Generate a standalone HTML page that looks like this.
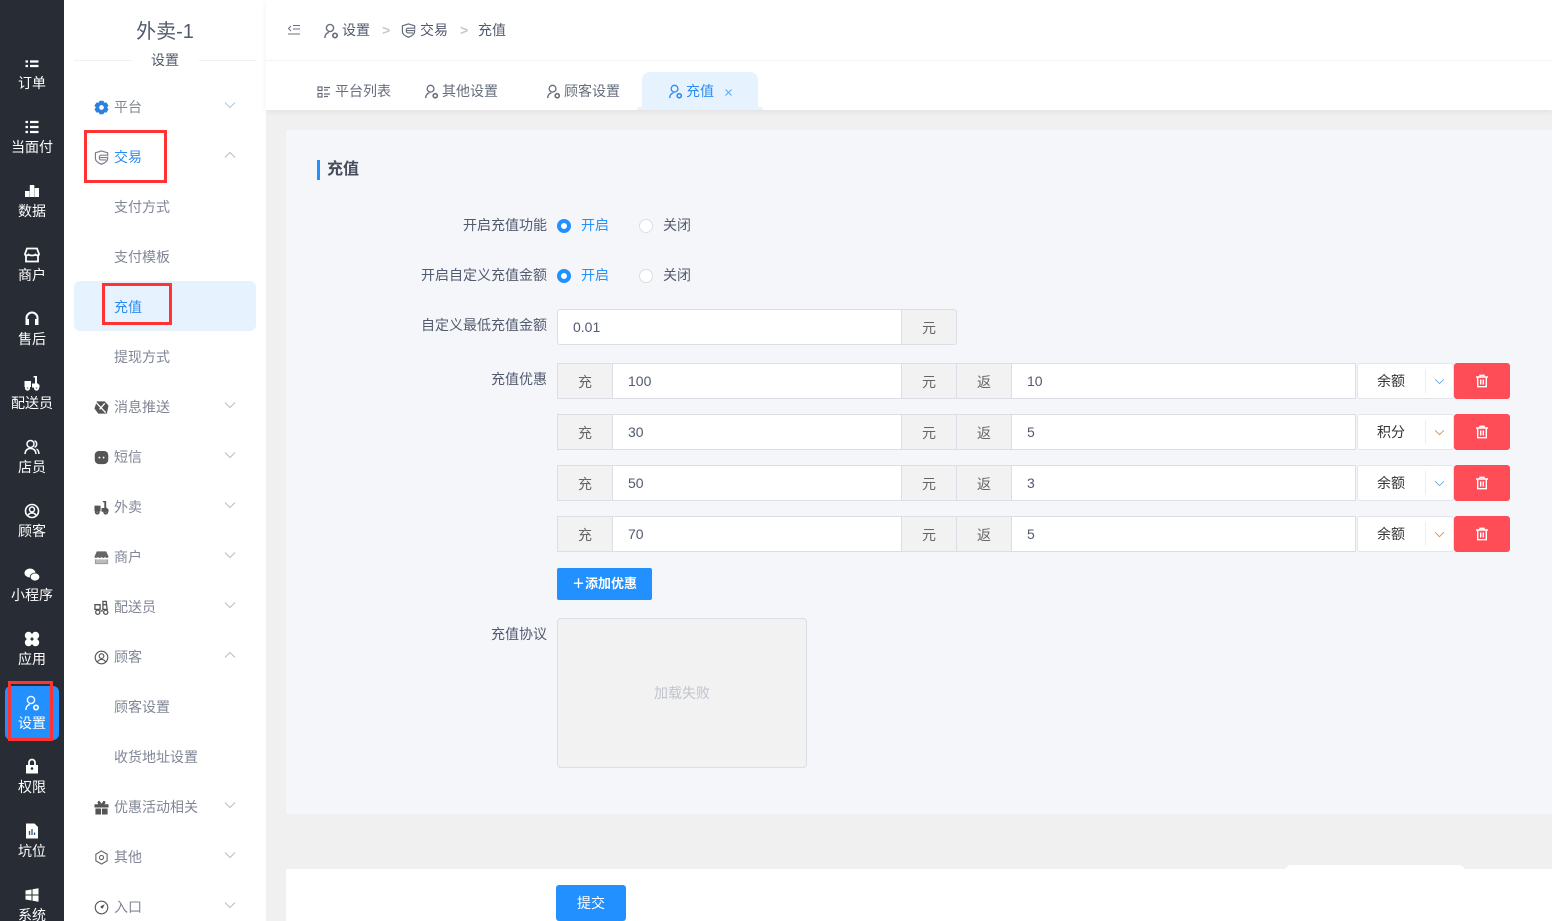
<!DOCTYPE html>
<html lang="zh-CN">
<head>
<meta charset="utf-8">
<title>充值</title>
<style>
html,body{margin:0;padding:0;width:1552px;height:921px;overflow:hidden;background:#f0f0f0}
body{position:relative;font-family:"Liberation Sans","Noto Sans CJK SC",sans-serif;font-size:14px;color:#515a6e}
div,span,svg{position:absolute;box-sizing:border-box}
.t{white-space:nowrap;line-height:20px;height:20px}
#nav{left:0;top:0;width:64px;height:921px;background:#282c35}
.nl{left:0;width:64px;text-align:center;color:#fff;font-size:14px;line-height:20px;height:20px;white-space:nowrap}
.ni{left:24px;width:16px;height:16px;color:#fff}
#side{left:64px;top:0;width:202px;height:921px;background:#fff}
.m{left:114px;color:#808695}
.mi{left:94px;width:15px;height:15px;color:#666}
.ch{left:224px;width:12px;height:8px;color:#b9bdc6}
.red{border:3px solid #ff3333}
#top{left:266px;top:0;width:1286px;height:110px;background:#fff;box-shadow:0 2px 6px rgba(0,0,0,.06)}
.lab{right:1005px;color:#515a6e;text-align:right}
.addon{background:#f2f2f2;border:1px solid #dcdee6;color:#666;text-align:center;height:36px;line-height:36px}
.inp{background:#fff;border:1px solid #dcdee6;color:#515a6e;height:36px;line-height:34px;padding-left:15px}
.sel{left:1357px;width:97px;height:36px;background:#fff;border:1px solid #e3e5eb;border-radius:3px;color:#333}
.del{left:1454px;width:56px;height:36px;background:#ff4d58;border-radius:3px}
.ra{width:14px;height:14px;border-radius:50%}
.on{background:#fff;border:4px solid #2291ff}
.off{background:#fff;border:1px solid #dcdee6}
</style>
</head>
<body>
<svg width="0" height="0" style="display:none">
<symbol id="user" viewBox="0 0 16 16"><circle cx="7" cy="5" r="3.600" fill="none" stroke="currentColor" stroke-width="1.400"/><path d="M1.800 15c.2-3 1.700-5 4-5.600" fill="none" stroke="currentColor" stroke-width="1.400"/><circle cx="12" cy="12.500" r="2.200" fill="none" stroke="currentColor" stroke-width="1.700"/></symbol>
<symbol id="shield" viewBox="0 0 16 16"><path d="M8 1 14.500 3v6c0 3-3.500 5-6.500 6.200C5 14 1.500 12 1.500 9V3z" fill="none" stroke="currentColor" stroke-width="1.300"/><path d="M15 5.500H7.500A1.800 1.800 0 0 0 5.700 7.300v1.500a1.800 1.800 0 0 0 1.800 1.800H13M6 8h8" fill="#fff" stroke="currentColor" stroke-width="1.200"/></symbol>
<symbol id="chev" viewBox="0 0 12 8"><path d="M1 1.500 6 6.500 11 1.500" fill="none" stroke="currentColor" stroke-width="1"/></symbol>
<symbol id="chu" viewBox="0 0 12 8"><path d="M1 6.500 6 1.500 11 6.500" fill="none" stroke="currentColor" stroke-width="1"/></symbol>
<symbol id="trash" viewBox="0 0 14 14"><path d="M1 3h12M5 3V1.300h4V3M2.700 3v9.700h8.600V3M5.700 5.500v5M8.300 5.500v5" fill="none" stroke="#fff" stroke-width="1.400"/></symbol>
<symbol id="scoot" viewBox="0 0 16 16"><path d="M.5 6h6.500v6H.5zM8 8.500h3V2.500h-1.500V1H13v7l2.500 2v2.500H8z" fill="currentColor"/><circle cx="3.500" cy="13" r="2.600" fill="currentColor"/><circle cx="12.500" cy="13" r="2.600" fill="currentColor"/><circle cx="3.500" cy="13" r=".9" fill="#888"/><circle cx="12.500" cy="13" r=".9" fill="#888"/></symbol>
<symbol id="shop" viewBox="0 0 16 16"><path d="M3 1.500h10L15.500 7c0 1.800-3 1.800-3.700.5-1 1.300-2.800 1.300-3.800 0-1 1.300-2.800 1.300-3.800 0C3.500 8.800.5 8.800.5 7z" fill="currentColor"/><path d="M1.500 10v4.500h13V10" fill="#bbb" stroke="#999" stroke-width="1"/></symbol>
</svg>

<div id="nav"></div>
<svg class="ni" style="top:58px" viewBox="0 0 16 16"><path d="M1.500 3.500h2.500M6 3.500h8.500M1.500 8h2.500M6 8h8.500" stroke="#fff" stroke-width="2.200" fill="none"/></svg>
<div class="nl" style="top:73px">订单</div>
<svg class="ni" style="top:119px" viewBox="0 0 16 16"><path d="M1.500 3h2.500M6 3h8.500M1.500 8h2.500M6 8h8.500M1.500 13h2.500M6 13h8.500" stroke="#fff" stroke-width="2.200" fill="none"/></svg>
<div class="nl" style="top:137px">当面付</div>
<svg class="ni" style="top:183px" viewBox="0 0 16 16"><path d="M1 8h4.500v6H1zM5.800 2h4.500v12H5.800zM10.600 5H15v9h-4.400z" fill="#fff"/></svg>
<div class="nl" style="top:201px">数据</div>
<svg class="ni" style="top:247px" viewBox="0 0 16 16"><path d="M3 1.500h10L15 7c0 1.800-2.500 1.800-3.500.6-1 1.200-6 1.200-7 0C3.500 8.800 1 8.800 1 7zM2 9v5.500h12V9" fill="none" stroke="#fff" stroke-width="1.800"/></svg>
<div class="nl" style="top:265px">商户</div>
<svg class="ni" style="top:311px" viewBox="0 0 16 16"><path d="M2.500 10V7a5.500 5.500 0 0 1 11 0v3" fill="none" stroke="#fff" stroke-width="2"/><path d="M1.500 8h3.500v6H1.500zM11 8h3.500v6H11z" fill="#fff"/></svg>
<div class="nl" style="top:329px">售后</div>
<svg class="ni" style="top:375px;color:#fff"><use href="#scoot"/></svg>
<div class="nl" style="top:393px">配送员</div>
<svg class="ni" style="top:439px" viewBox="0 0 16 16"><circle cx="6.500" cy="5" r="3.500" fill="none" stroke="#fff" stroke-width="1.500"/><path d="M1 15c.3-3.500 2.200-5.500 5.500-5.500s5.200 2 5.500 5.500M10.500 1.800a3.500 3.500 0 0 1 0 6.500M12.500 10c1.500.8 2.300 2.500 2.500 5" fill="none" stroke="#fff" stroke-width="1.500"/></svg>
<div class="nl" style="top:457px">店员</div>
<svg class="ni" style="top:503px" viewBox="0 0 16 16"><circle cx="8" cy="8" r="6.500" fill="none" stroke="#fff" stroke-width="1.600"/><circle cx="8" cy="6.500" r="2.500" fill="none" stroke="#fff" stroke-width="1.500"/><path d="M3.500 13c1-2.200 2.500-3 4.500-3s3.500.8 4.500 3" fill="none" stroke="#fff" stroke-width="1.500"/></svg>
<div class="nl" style="top:521px">顾客</div>
<svg class="ni" style="top:567px" viewBox="0 0 16 16"><ellipse cx="6" cy="6" rx="5.500" ry="4.500" fill="#fff"/><ellipse cx="11" cy="10" rx="4.800" ry="4" fill="#fff" stroke="#282c35" stroke-width=".8"/></svg>
<div class="nl" style="top:585px">小程序</div>
<svg class="ni" style="top:631px" viewBox="0 0 16 16"><ellipse cx="4.500" cy="4.500" rx="3.700" ry="3.700" fill="#fff"/><ellipse cx="11.500" cy="4.500" rx="3.700" ry="3.700" fill="#fff"/><ellipse cx="4.500" cy="11.500" rx="3.700" ry="3.700" fill="#fff"/><ellipse cx="11.500" cy="11.500" rx="3.700" ry="3.700" fill="#fff"/></svg>
<div class="nl" style="top:649px">应用</div>
<div style="left:5px;top:686px;width:54px;height:54px;background:#2291ff;border-radius:6px"></div>
<svg class="ni" style="top:695px;color:#fff"><use href="#user"/></svg>
<div class="nl" style="top:713px">设置</div>
<div class="red" style="left:8px;top:681px;width:45px;height:60px"></div>
<svg class="ni" style="top:758px" viewBox="0 0 16 16"><path d="M5 7V4.500a3 3 0 0 1 6 0V7" fill="none" stroke="#fff" stroke-width="1.800"/><path d="M2 7h12v8.500H2z" fill="#fff"/><circle cx="8" cy="10.500" r="1.300" fill="#282c35"/></svg>
<div class="nl" style="top:777px">权限</div>
<svg class="ni" style="top:823px" viewBox="0 0 16 16"><path d="M2 .5h8.500L14 4v11.500H2z" fill="#fff"/><path d="M5.500 8v4M8 6v6M10.500 9.500V12" stroke="#36527a" stroke-width="1.300"/></svg>
<div class="nl" style="top:841px">坑位</div>
<svg class="ni" style="top:887px" viewBox="0 0 16 16"><path d="M1.500 3.500 7.500 2.500v5h-6zM8.500 2.300 14.500 1.300v6.200H8.500zM1.500 8.500h6v5l-6-1zM8.500 8.500h6v6.200l-6-1z" fill="#fff"/></svg>
<div class="nl" style="top:905px">系统</div>

<div id="side"></div>
<div class="t" style="left:64px;width:202px;top:20px;font-size:20px;line-height:24px;height:24px;text-align:center;color:#515a6e">外卖-1</div>
<div style="left:74px;top:60px;width:182px;height:1px;background:#f0f1f3"></div>
<div class="t" style="left:131px;width:68px;top:50px;background:#fff;text-align:center;color:#515a6e">设置</div>

<div style="left:74px;top:281px;width:182px;height:50px;background:#e6f3ff;border-radius:6px"></div>

<svg class="mi" style="top:100px" viewBox="0 0 16 16"><path d="M6 .8h4l1 2 2.300-.2L15.500 6 14 8l1.500 2-2.200 3.400-2.300-.2-1 2H6l-1-2-2.300.2L.5 10 2 8 .5 6l2.200-3.400 2.300.2z" fill="#2d7fe0"/><circle cx="8" cy="8" r="2.500" fill="#fff"/></svg>
<div class="t m" style="top:97px">平台</div>
<svg class="ch" style="top:101px;color:#a9c8ea"><use href="#chev"/></svg>

<svg class="mi" style="top:150px;color:#7a808c"><use href="#shield"/></svg>
<div class="t m" style="top:147px;color:#2d8cf0">交易</div>
<svg class="ch" style="top:151px"><use href="#chu"/></svg>
<div class="red" style="left:84px;top:130px;width:83px;height:53px"></div>

<div class="t m" style="top:197px">支付方式</div>
<div class="t m" style="top:247px">支付模板</div>
<div class="t m" style="top:297px;color:#2d8cf0">充值</div>
<div class="red" style="left:102px;top:283px;width:70px;height:42px"></div>
<div class="t m" style="top:347px">提现方式</div>

<svg class="mi" style="top:400px" viewBox="0 0 16 16"><path d="M3 1.500h8.500L15.500 6l-1.800 8.500H4.500L.5 9z" fill="#555"/><path d="M2 2.500l10.500 11M11.500 3.500 6 10" stroke="#fff" stroke-width="1.400"/></svg>
<div class="t m" style="top:397px">消息推送</div>
<svg class="ch" style="top:401px"><use href="#chev"/></svg>

<svg class="mi" style="top:450px" viewBox="0 0 16 16"><rect x=".8" y="1" width="14.400" height="14" rx="4.500" fill="#555"/><circle cx="5.800" cy="8" r="1" fill="#fff"/><circle cx="10.200" cy="8" r="1" fill="#fff"/></svg>
<div class="t m" style="top:447px">短信</div>
<svg class="ch" style="top:451px"><use href="#chev"/></svg>

<svg class="mi" style="top:500px;color:#555"><use href="#scoot"/></svg>
<div class="t m" style="top:497px">外卖</div>
<svg class="ch" style="top:501px"><use href="#chev"/></svg>

<svg class="mi" style="top:550px;color:#666"><use href="#shop"/></svg>
<div class="t m" style="top:547px">商户</div>
<svg class="ch" style="top:551px"><use href="#chev"/></svg>

<svg class="mi" style="top:600px" viewBox="0 0 16 16"><path d="M1 5h5.500v5H1zM9.500 1.500H13l1 8.500H9.500zM7 11.500h2.500M9.500 5h4" fill="none" stroke="#555" stroke-width="1.400"/><circle cx="4" cy="13" r="2.200" fill="none" stroke="#555" stroke-width="1.400"/><circle cx="12.500" cy="13" r="2.200" fill="none" stroke="#555" stroke-width="1.400"/></svg>
<div class="t m" style="top:597px">配送员</div>
<svg class="ch" style="top:601px"><use href="#chev"/></svg>

<svg class="mi" style="top:650px" viewBox="0 0 16 16"><circle cx="8" cy="8" r="6.700" fill="none" stroke="#555" stroke-width="1.200"/><circle cx="8" cy="6.500" r="2.500" fill="none" stroke="#555" stroke-width="1.200"/><path d="M3.500 13c1-2.200 2.500-3 4.500-3s3.500.8 4.500 3" fill="none" stroke="#555" stroke-width="1.200"/></svg>
<div class="t m" style="top:647px">顾客</div>
<svg class="ch" style="top:651px"><use href="#chu"/></svg>
<div class="t m" style="top:697px">顾客设置</div>
<div class="t m" style="top:747px">收货地址设置</div>

<svg class="mi" style="top:800px" viewBox="0 0 16 16"><path d="M.5 4.500h15v3.500H.5zM1.500 9h6v6.500h-6zM8.500 9h6v6.500h-6zM5 4.500C2.800 3 4 .3 6 1L8 4l2-3c2-.7 3.200 2 1 3.500z" fill="#555"/></svg>
<div class="t m" style="top:797px">优惠活动相关</div>
<svg class="ch" style="top:801px"><use href="#chev"/></svg>

<svg class="mi" style="top:850px" viewBox="0 0 16 16"><path d="M8 1 14 4.500v7L8 15l-6-3.500v-7z" fill="none" stroke="#666" stroke-width="1.200"/><circle cx="8" cy="8" r="2.200" fill="none" stroke="#666" stroke-width="1.200"/></svg>
<div class="t m" style="top:847px">其他</div>
<svg class="ch" style="top:851px"><use href="#chev"/></svg>

<svg class="mi" style="top:900px" viewBox="0 0 16 16"><circle cx="8" cy="8" r="6.700" fill="none" stroke="#555" stroke-width="1.200"/><path d="M11.500 4.500 9.200 9.200 7.500 8.500 6.800 6.800z" fill="#555"/></svg>
<div class="t m" style="top:897px">入口</div>
<svg class="ch" style="top:901px"><use href="#chev"/></svg>

<div id="top"></div>
<div style="left:266px;top:60px;width:1286px;height:1px;background:#f3f4f6"></div>
<svg style="left:287px;top:24px;width:14px;height:12px" viewBox="0 0 14 12"><path d="M4 2 1.500 4.500 4 7M6 1.500h7M6 5h7M1 10h12" fill="none" stroke="#6b7280" stroke-width="1"/></svg>
<svg style="left:323px;top:23px;width:16px;height:16px;color:#666d7c"><use href="#user"/></svg>
<div class="t" style="left:342px;top:20px">设置</div>
<div class="t" style="left:382px;top:20px;color:#c5c8ce;font-weight:bold">&gt;</div>
<svg style="left:401px;top:23px;width:15px;height:15px;color:#666d7c"><use href="#shield"/></svg>
<div class="t" style="left:420px;top:20px">交易</div>
<div class="t" style="left:460px;top:20px;color:#c5c8ce;font-weight:bold">&gt;</div>
<div class="t" style="left:478px;top:20px">充值</div>

<svg style="left:317px;top:85px;width:14px;height:14px" viewBox="0 0 14 14"><path d="M1 2h4v3.500H1zM1 8.500h4V12H1z" fill="none" stroke="#666d7c" stroke-width="1.200"/><path d="M7 2.500h6M7 5h4M7 9h6M7 11.500h4" stroke="#666d7c" stroke-width="1.200"/></svg>
<div class="t" style="left:335px;top:81px;color:#666d7c">平台列表</div>
<svg style="left:424px;top:84px;width:15px;height:15px;color:#666d7c"><use href="#user"/></svg>
<div class="t" style="left:442px;top:81px;color:#666d7c">其他设置</div>
<svg style="left:546px;top:84px;width:15px;height:15px;color:#666d7c"><use href="#user"/></svg>
<div class="t" style="left:564px;top:81px;color:#666d7c">顾客设置</div>
<div style="left:642px;top:72px;width:116px;height:38px;background:#e6f3ff;border-radius:8px 8px 0 0"></div>
<div style="left:637px;top:107px;width:126px;height:3px;background:#e6f3ff;border-radius:3px 3px 0 0"></div>
<svg style="left:668px;top:84px;width:15px;height:15px;color:#2d8cf0"><use href="#user"/></svg>
<div class="t" style="left:686px;top:81px;color:#2d8cf0">充值</div>
<svg style="left:724px;top:88px;width:9px;height:9px" viewBox="0 0 9 9"><path d="M1.500 1.500 7.500 7.500M7.500 1.500 1.500 7.500" stroke="#5aa7f2" stroke-width="1"/></svg>

<div style="left:286px;top:130px;width:1266px;height:684px;background:#f5f6fa"></div>
<div style="left:317px;top:160px;width:3px;height:20px;background:#2291ff"></div>
<div class="t" style="left:327px;top:160px;font-size:16px;color:#464c5b;font-weight:bold">充值</div>

<div class="t lab" style="top:215px">开启充值功能</div>
<div class="ra on" style="left:557px;top:219px"></div>
<div class="t" style="left:581px;top:215px;color:#2291ff">开启</div>
<div class="ra off" style="left:639px;top:219px"></div>
<div class="t" style="left:663px;top:215px">关闭</div>

<div class="t lab" style="top:265px">开启自定义充值金额</div>
<div class="ra on" style="left:557px;top:269px"></div>
<div class="t" style="left:581px;top:265px;color:#2291ff">开启</div>
<div class="ra off" style="left:639px;top:269px"></div>
<div class="t" style="left:663px;top:265px">关闭</div>

<div class="t lab" style="top:315px">自定义最低充值金额</div>
<div class="inp" style="left:557px;top:309px;width:345px;border-radius:3px 0 0 3px">0.01</div>
<div class="addon" style="left:901px;top:309px;width:56px;border-radius:0 3px 3px 0">元</div>

<div class="t lab" style="top:369px">充值优惠</div>

<div class="addon" style="left:557px;top:363px;width:56px">充</div>
<div class="inp" style="left:612px;top:363px;width:290px">100</div>
<div class="addon" style="left:901px;top:363px;width:56px">元</div>
<div class="addon" style="left:956px;top:363px;width:56px">返</div>
<div class="inp" style="left:1011px;top:363px;width:345px">10</div>
<div class="sel" style="top:363px"></div>
<div class="t" style="left:1377px;top:371px;color:#333">余额</div>
<div style="left:1425px;top:369px;width:1px;height:24px;background:#eceef2"></div>
<svg style="left:1434px;top:378px;width:11px;height:7px;color:#5aa7f2"><use href="#chev"/></svg>
<div class="del" style="top:363px"></div>
<svg style="left:1475px;top:374px;width:14px;height:14px"><use href="#trash"/></svg>

<div class="addon" style="left:557px;top:414px;width:56px">充</div>
<div class="inp" style="left:612px;top:414px;width:290px">30</div>
<div class="addon" style="left:901px;top:414px;width:56px">元</div>
<div class="addon" style="left:956px;top:414px;width:56px">返</div>
<div class="inp" style="left:1011px;top:414px;width:345px">5</div>
<div class="sel" style="top:414px"></div>
<div class="t" style="left:1377px;top:422px;color:#333">积分</div>
<div style="left:1425px;top:420px;width:1px;height:24px;background:#eceef2"></div>
<svg style="left:1434px;top:429px;width:11px;height:7px;color:#d98a45"><use href="#chev"/></svg>
<div class="del" style="top:414px"></div>
<svg style="left:1475px;top:425px;width:14px;height:14px"><use href="#trash"/></svg>

<div class="addon" style="left:557px;top:465px;width:56px">充</div>
<div class="inp" style="left:612px;top:465px;width:290px">50</div>
<div class="addon" style="left:901px;top:465px;width:56px">元</div>
<div class="addon" style="left:956px;top:465px;width:56px">返</div>
<div class="inp" style="left:1011px;top:465px;width:345px">3</div>
<div class="sel" style="top:465px"></div>
<div class="t" style="left:1377px;top:473px;color:#333">余额</div>
<div style="left:1425px;top:471px;width:1px;height:24px;background:#eceef2"></div>
<svg style="left:1434px;top:480px;width:11px;height:7px;color:#5aa7f2"><use href="#chev"/></svg>
<div class="del" style="top:465px"></div>
<svg style="left:1475px;top:476px;width:14px;height:14px"><use href="#trash"/></svg>

<div class="addon" style="left:557px;top:516px;width:56px">充</div>
<div class="inp" style="left:612px;top:516px;width:290px">70</div>
<div class="addon" style="left:901px;top:516px;width:56px">元</div>
<div class="addon" style="left:956px;top:516px;width:56px">返</div>
<div class="inp" style="left:1011px;top:516px;width:345px">5</div>
<div class="sel" style="top:516px"></div>
<div class="t" style="left:1377px;top:524px;color:#333">余额</div>
<div style="left:1425px;top:522px;width:1px;height:24px;background:#eceef2"></div>
<svg style="left:1434px;top:531px;width:11px;height:7px;color:#d98a45"><use href="#chev"/></svg>
<div class="del" style="top:516px"></div>
<svg style="left:1475px;top:527px;width:14px;height:14px"><use href="#trash"/></svg>

<div style="left:557px;top:568px;width:95px;height:32px;background:#2291ff;border-radius:2px"></div>
<div class="t" style="left:557px;width:95px;top:574px;color:#fff;text-align:center;font-size:13px;font-weight:bold">＋添加优惠</div>

<div class="t lab" style="top:624px">充值协议</div>
<div style="left:557px;top:618px;width:250px;height:150px;background:#f2f2f2;border:1px solid #dcdee6;border-radius:4px"></div>
<div class="t" style="left:557px;width:250px;top:683px;text-align:center;color:#c0c4cc">加载失败</div>

<div style="left:286px;top:869px;width:1266px;height:52px;background:#fff"></div>
<div style="left:1285px;top:865px;width:180px;height:6px;background:#fff;border-radius:8px 8px 0 0"></div>
<div style="left:556px;top:885px;width:70px;height:36px;background:#2291ff;border-radius:3px"></div>
<div class="t" style="left:556px;width:70px;top:893px;color:#fff;text-align:center">提交</div>
</body>
</html>
